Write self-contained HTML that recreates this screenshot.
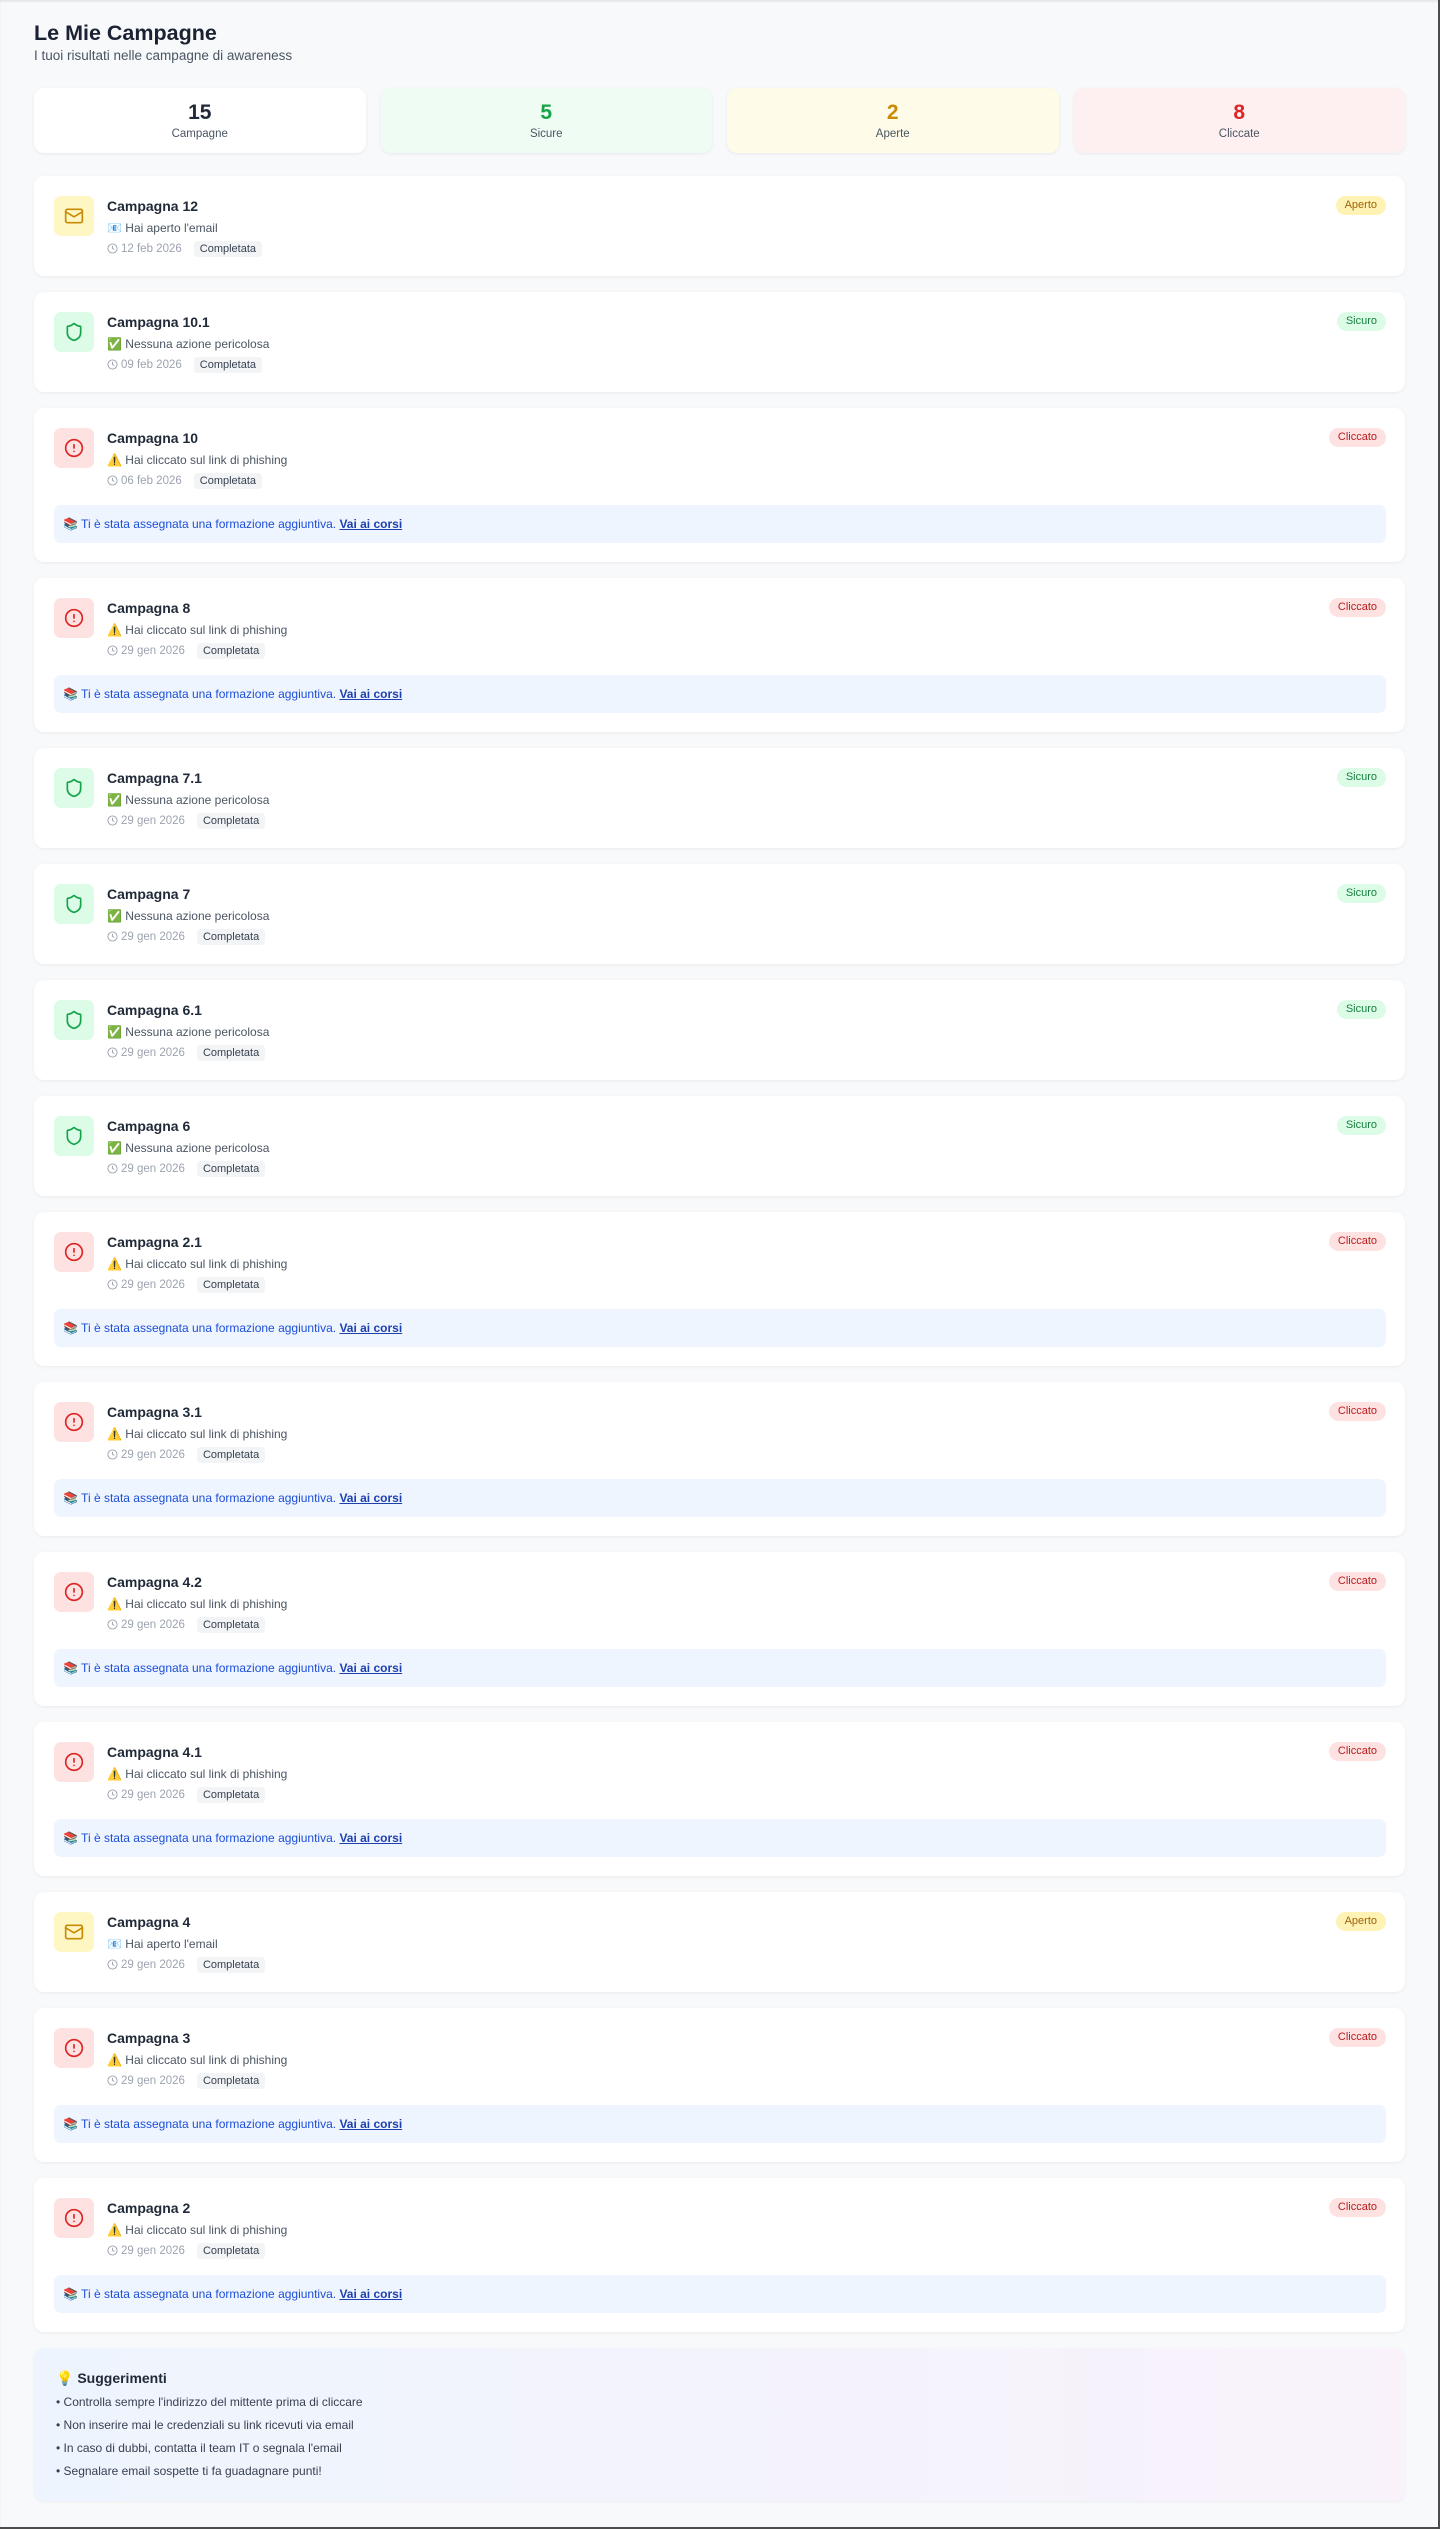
<!DOCTYPE html>
<html><head><meta charset="utf-8">
<style>
*{box-sizing:border-box;margin:0;padding:0}
html,body{width:1440px;height:2529px;overflow:hidden}
body{background:#f8f9fb;font-family:"Liberation Sans","DejaVu Sans",sans-serif;color:#1f2937;position:relative;box-shadow:inset 0 2px 3px -1px rgba(0,0,0,.12)}
.frame{position:absolute;right:0;top:0;width:2px;height:2529px;background:#4b4b4b}
.frameb{position:absolute;left:0;bottom:0;width:1440px;height:2px;background:#4b4b4b}
.wrap{position:absolute;left:34px;top:22px;width:1371px}
h1{font-size:21.5px;line-height:22px;font-weight:700;color:#1a2233}
.sub{margin-top:2px;font-size:13.5px;line-height:20px;color:#4b5563}
.stats{margin-top:22px;display:flex;gap:15px;height:65px}
.stat{flex:1;border-radius:10px;text-align:center;box-shadow:0 1px 3px rgba(0,0,0,.07)}
.stat b{display:block;font-size:21px;line-height:24px;margin-top:13px}
.stat span{display:block;font-size:11.5px;color:#4b5563;line-height:16px;margin-top:1px}
.list{margin-top:23px}
.card{background:#fff;border-radius:10px;box-shadow:0 1px 3px rgba(0,0,0,.06);padding:20px 19px 19px 20px;margin-bottom:16px;position:relative}
.row{display:flex;height:61px}
.ic{width:40px;height:40px;border-radius:7px;display:flex;align-items:center;justify-content:center;flex:none}
.y{background:#fef6c3}.g{background:#dcfce7}.r{background:#fee2e2}
.txt{margin-left:13px}
.t{font-size:14px;font-weight:700;line-height:20px;color:#1f2937}
.d{margin-top:2px;font-size:12px;line-height:20px;color:#4b5563}
.m{margin-top:2px;height:17px;display:flex;align-items:center;font-size:11.5px;color:#9ca3af}
.m svg{margin-right:3px}
.cp{margin-left:12px;background:#f3f4f6;color:#374151;font-size:11px;padding:0 6px;border-radius:4px;line-height:16px}
.pill{position:absolute;right:19px;top:20px;height:19px;line-height:19px;padding:0 9px;border-radius:10px;font-size:11px}
.pa{background:#fef3b4;color:#a16207}.ps{background:#dcfce7;color:#15803d}.pc{background:#fee2e2;color:#b91c1c}
.ban{margin-top:16px;height:38px;border-radius:7px;background:#eef5ff;color:#1d4ed8;font-size:12px;line-height:38px;padding-left:9px}
.ban a{color:#1e40af;text-decoration:underline;font-weight:700}
.sug{border-radius:10px;background:linear-gradient(90deg,#eef4fd,#f4f3fc 60%,#f9f2fa);padding:20px 20px 18px 22px;height:153px;box-shadow:0 1px 3px rgba(0,0,0,.05)}
.sug h3{font-size:14px;line-height:20px;font-weight:700;color:#1f2937;margin-bottom:3px}
.sug p{font-size:12px;line-height:23px;color:#374151}
</style></head><body>
<div class="wrap">
<h1>Le Mie Campagne</h1>
<div class="sub">I tuoi risultati nelle campagne di awareness</div>
<div class="stats">
<div class="stat" style="background:#fff"><b style="color:#1f2937">15</b><span>Campagne</span></div>
<div class="stat" style="background:#effcf3"><b style="color:#16a34a">5</b><span>Sicure</span></div>
<div class="stat" style="background:#fefbe8"><b style="color:#ca8a04">2</b><span>Aperte</span></div>
<div class="stat" style="background:#fef0f0"><b style="color:#dc2626">8</b><span>Cliccate</span></div>
</div>
<div class="list" id="list"></div>
<div class="sug">
<h3>💡 Suggerimenti</h3>
<p>• Controlla sempre l'indirizzo del mittente prima di cliccare</p>
<p>• Non inserire mai le credenziali su link ricevuti via email</p>
<p>• In caso di dubbi, contatta il team IT o segnala l'email</p>
<p>• Segnalare email sospette ti fa guadagnare punti!</p>
</div>
</div>
<div class="frame"></div><div class="frameb"></div>
<script>
var clock='<svg width="11" height="11" viewBox="0 0 24 24" fill="none" stroke="#9ca3af" stroke-width="2"><circle cx="12" cy="12" r="10"/><path d="M12 6v6l4 2"/></svg>';
var ic={
A:'<div class="ic y"><svg width="20" height="20" viewBox="0 0 24 24" fill="none" stroke="#ca8a04" stroke-width="2" stroke-linecap="round" stroke-linejoin="round"><rect x="2" y="4" width="20" height="16" rx="2"/><path d="M22 7l-10 6L2 7"/></svg></div>',
S:'<div class="ic g"><svg width="20" height="20" viewBox="0 0 24 24" fill="none" stroke="#16a34a" stroke-width="2" stroke-linecap="round" stroke-linejoin="round"><path d="M20 13c0 5-3.5 7.5-7.66 8.95a1 1 0 0 1-.67-.01C7.5 20.5 4 18 4 13V6a1 1 0 0 1 1-1c2 0 4.5-1.2 6.24-2.72a1.170 1.170 0 0 1 1.52 0C14.51 3.81 17 5 19 5a1 1 0 0 1 1 1z"/></svg></div>',
C:'<div class="ic r"><svg width="20" height="20" viewBox="0 0 24 24" fill="none" stroke="#dc2626" stroke-width="2" stroke-linecap="round" stroke-linejoin="round"><circle cx="12" cy="12" r="10"/><path d="M12 8v4M12 16h.01"/></svg></div>'};
var desc={A:'📧 Hai aperto l\'email',S:'✅ Nessuna azione pericolosa',C:'⚠️ Hai cliccato sul link di phishing'};
var pill={A:'<span class="pill pa">Aperto</span>',S:'<span class="pill ps">Sicuro</span>',C:'<span class="pill pc">Cliccato</span>'};
var data=[['12','A','12 feb 2026'],['10.1','S','09 feb 2026'],['10','C','06 feb 2026'],['8','C'],['7.1','S'],['7','S'],['6.1','S'],['6','S'],['2.1','C'],['3.1','C'],['4.2','C'],['4.1','C'],['4','A'],['3','C'],['2','C']];
var h='';
data.forEach(function(d){var k=d[1];
h+='<div class="card">'+pill[k]+'<div class="row">'+ic[k]+'<div class="txt"><div class="t">Campagna '+d[0]+'</div><div class="d">'+desc[k]+'</div><div class="m">'+clock+(d[2]||'29 gen 2026')+'<span class="cp">Completata</span></div></div></div>'+(k=='C'?'<div class="ban">📚 Ti è stata assegnata una formazione aggiuntiva. <a>Vai ai corsi</a></div>':'')+'</div>';});
document.getElementById('list').innerHTML=h;
</script>
</body></html>
